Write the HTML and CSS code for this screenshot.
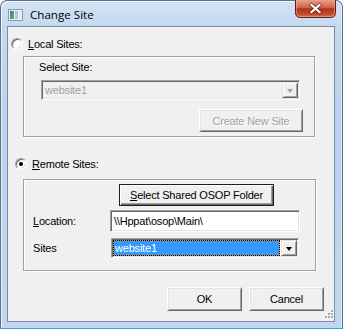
FILE: index.html
```html
<!DOCTYPE html>
<html>
<head>
<meta charset="utf-8">
<link rel="stylesheet" href="styles.css">
</head>
<body>
<div class="window">
  <div class="titlebar">
    <svg class="appicon" width="15" height="12" viewBox="0 0 15 12">
      <defs>
        <linearGradient id="ig" x1="0" y1="0" x2="1" y2="1">
          <stop offset="0" stop-color="#2f7c86"/>
          <stop offset="1" stop-color="#6cb27a"/>
        </linearGradient>
      </defs>
      <rect x="0.5" y="0.5" width="14" height="11" fill="#eef1f4" stroke="#8c98a4"/>
      <rect x="2" y="2" width="4" height="8" fill="url(#ig)"/>
      <rect x="7" y="2" width="3" height="8" fill="#b9c6d2"/>
      <rect x="11" y="2" width="2" height="8" fill="#dfe6ec"/>
    </svg>
    <span class="title">Change Site</span>
    <svg class="close" width="41" height="18" viewBox="0 0 41 18">
      <defs>
        <linearGradient id="cg" x1="0" y1="0" x2="0" y2="1">
          <stop offset="0" stop-color="#e8a08c"/>
          <stop offset="0.42" stop-color="#d2664a"/>
          <stop offset="0.5" stop-color="#b3351b"/>
          <stop offset="0.78" stop-color="#c0462a"/>
          <stop offset="1" stop-color="#d87256"/>
        </linearGradient>
      </defs>
      <path d="M0.5 0 V12.5 Q0.5 17.5 5.5 17.5 H35.5 Q40.5 17.5 40.5 12.5 V0" fill="url(#cg)" stroke="#5a2014"/>
      <path d="M1.5 0 V12.5 Q1.5 16.5 5.5 16.5 H35.5 Q39.5 16.5 39.5 12.5 V0" fill="none" stroke="#f0b4a0" stroke-opacity="0.55"/>
      <path d="M16.5 5 L24.5 12 M24.5 5 L16.5 12" stroke="#4a140a" stroke-width="4" stroke-linecap="square" opacity="0.55"/>
      <path d="M16.5 5 L24.5 12 M24.5 5 L16.5 12" stroke="#ffffff" stroke-width="2.2" stroke-linecap="square"/>
    </svg>
  </div>
  <div class="client">
    <div class="radio-row local">
      <span class="radio"></span>
      <span><u>L</u>ocal Sites:</span>
    </div>
    <div class="group group1">
      <div class="glabel">Select Site:</div>
      <div class="field combo disabled">
        <span class="value">website1</span>
        <span class="arrow-btn"><span class="arrow"></span></span>
      </div>
      <div class="btn create disabled">Create New Site</div>
    </div>
    <div class="radio-row remote">
      <span class="radio checked"></span>
      <span><u>R</u>emote Sites:</span>
    </div>
    <div class="group group2">
      <div class="btn default shared"><span><u>S</u>elect Shared OSOP Folder</span></div>
      <div class="form-row loc-row">
        <span class="flabel"><u>L</u>ocation:</span>
        <div class="field text">\\Hppat\osop\Main\</div>
      </div>
      <div class="form-row sites-row">
        <span class="flabel">Sites</span>
        <div class="field combo sites">
          <span class="selection">website1</span>
          <span class="arrow-btn"><span class="arrow"></span></span>
        </div>
      </div>
    </div>
    <div class="actions">
      <div class="btn action">OK</div>
      <div class="btn action">Cancel</div>
    </div>
    <svg class="grip" width="12" height="12" viewBox="0 0 12 12">
      <g fill="#ffffff">
        <rect x="10" y="2" width="2" height="2"/>
        <rect x="7" y="5" width="2" height="2"/><rect x="10" y="5" width="2" height="2"/>
        <rect x="4" y="8" width="2" height="2"/><rect x="7" y="8" width="2" height="2"/><rect x="10" y="8" width="2" height="2"/>
      </g>
      <g fill="#a8a8a8">
        <rect x="9" y="1" width="2" height="2"/>
        <rect x="6" y="4" width="2" height="2"/><rect x="9" y="4" width="2" height="2"/>
        <rect x="3" y="7" width="2" height="2"/><rect x="6" y="7" width="2" height="2"/><rect x="9" y="7" width="2" height="2"/>
      </g>
    </svg>
  </div>
</div>
</body>
</html>
```

FILE: styles.css
```css
* { box-sizing: border-box; margin: 0; padding: 0; }
html, body { width: 343px; height: 329px; overflow: hidden; background: #ffffff; }
body {
  font-family: "Liberation Sans", Arial, sans-serif;
  font-size: 11px;
  letter-spacing: -0.2px;
  color: #000;
}
u { text-decoration: underline; text-underline-offset: 1px; }

.window {
  width: 343px;
  height: 329px;
  border: 1px solid #5c6f84;
  border-bottom-color: #3aa3dc;
  border-radius: 7px 7px 0 0;
  background: linear-gradient(180deg, #d3e3f5 0px, #c4d9f0 26px, #bad2ec 120px, #c0d7ef 329px);
  box-shadow: inset 1px 1px 0 rgba(255,255,255,0.7), inset -1px 0 0 rgba(255,255,255,0.5);
  display: flex;
  flex-direction: column;
  padding: 0 7px 6px 6px;
}

.titlebar {
  height: 25px;
  display: flex;
  align-items: center;
}
.appicon { margin-left: 1px; margin-top: 2px; flex: none; }
.title {
  font-family: "Open Sans", "Noto Sans", sans-serif;
  font-size: 11.6px;
  letter-spacing: 0;
  margin-left: 7px;
  margin-top: 1px;
  color: #000;
}
.close {
  display: block;
  flex: none;
  margin: -1px -1px 0 auto;
  align-self: flex-start;
}

.client {
  position: relative;
  height: 296px;
  border: 1px solid #7d8da0;
  background: #f0f0f0;
}

.radio-row {
  height: 13px;
  display: flex;
  align-items: center;
  gap: 5px;
}
.radio-row.local { margin: 10px 0 0 3px; }
.radio-row.remote { margin: 20px 0 0 7px; }

.radio {
  position: relative;
  width: 12px;
  height: 12px;
  flex: none;
  border-radius: 50%;
  border: 1px solid;
  border-color: #a0a0a0 #ffffff #ffffff #a0a0a0;
  background: #ffffff;
  box-shadow: inset 1px 1px 0 #696969, inset -1px -1px 0 #e3e3e3;
}
.radio.checked::after {
  content: "";
  position: absolute;
  left: 3px;
  top: 3px;
  width: 4px;
  height: 4px;
  border-radius: 50%;
  background: #000;
}

.group {
  border: 1px solid #a0a0a0;
  box-shadow: inset 1px 1px 0 #ffffff, 1px 1px 0 #ffffff;
}
.group1 {
  margin: 6px 19px 0 15px;
  height: 81px;
  padding: 4px 0 0 15px;
}
.glabel { height: 13px; line-height: 13px; }

.field {
  border: 1px solid;
  border-color: #a0a0a0 #ffffff #ffffff #a0a0a0;
  box-shadow: inset 1px 1px 0 #696969, inset -1px -1px 0 #e3e3e3;
  padding: 1px;
}
.combo {
  display: flex;
  align-items: stretch;
}
.group1 .combo {
  margin: 6px 0 0 2px;
  width: 259px;
  height: 20px;
  background: #f0f0f0;
}
.combo .value {
  flex: 1;
  padding-left: 2px;
  line-height: 16px;
  color: #a0a0a0;
}
.arrow-btn {
  width: 16px;
  flex: none;
  display: flex;
  align-items: center;
  justify-content: center;
  background: #f0f0f0;
  border: 1px solid;
  border-color: #e3e3e3 #696969 #696969 #e3e3e3;
  box-shadow: inset 1px 1px 0 #ffffff, inset -1px -1px 0 #a0a0a0;
}
.arrow {
  width: 0;
  height: 0;
  border-left: 3.5px solid transparent;
  border-right: 3.5px solid transparent;
  border-top: 4px solid #000;
  margin-top: 1px;
}
.disabled .arrow { border-top-color: #a0a0a0; }

.btn {
  background: #f0f0f0;
  border: 1px solid;
  border-color: #ffffff #696969 #696969 #ffffff;
  box-shadow: inset 1px 1px 0 #e3e3e3, inset -1px -1px 0 #a0a0a0;
  display: flex;
  align-items: center;
  justify-content: center;
}
.btn.create {
  margin: 9px 0 0 160px;
  width: 104px;
  height: 23px;
}
.btn.disabled {
  color: #a0a0a0;
  text-shadow: 1px 1px 0 #ffffff;
}
.btn.default {
  border: 1px solid #1e1e1e;
  box-shadow: inset 1px 1px 0 #ffffff, inset -1px -1px 0 #696969, inset -2px -2px 0 #a0a0a0;
}

.group2 {
  margin: 9px 18px 0 15px;
  height: 92px;
  padding-top: 4px;
}
.btn.shared {
  margin-left: 95px;
  width: 155px;
  height: 22px;
}
.form-row {
  display: flex;
  align-items: center;
}
.loc-row { margin-top: 4px; }
.sites-row { margin-top: 6px; }
.flabel {
  width: 86px;
  padding-left: 9px;
  flex: none;
}
.field.text {
  width: 190px;
  height: 22px;
  background: #ffffff;
  padding: 1px 3px;
  line-height: 18px;
}
.combo.sites {
  margin-left: 1px;
  width: 188px;
  height: 20px;
  background: #ffffff;
}
.selection {
  flex: 1;
  margin-right: 1px;
  border: 1px dotted #000;
  background: linear-gradient(#3399ff, #3399ff) padding-box, linear-gradient(#e5922f, #e5922f) border-box;
  color: #ffffff;
  padding-left: 1px;
  line-height: 14px;
}

.actions {
  margin-top: 16px;
  display: flex;
  justify-content: flex-end;
  gap: 7px;
  padding-right: 10px;
}
.btn.action {
  width: 75px;
  height: 24px;
}

.grip {
  position: absolute;
  right: 0;
  bottom: 0;
}
```
